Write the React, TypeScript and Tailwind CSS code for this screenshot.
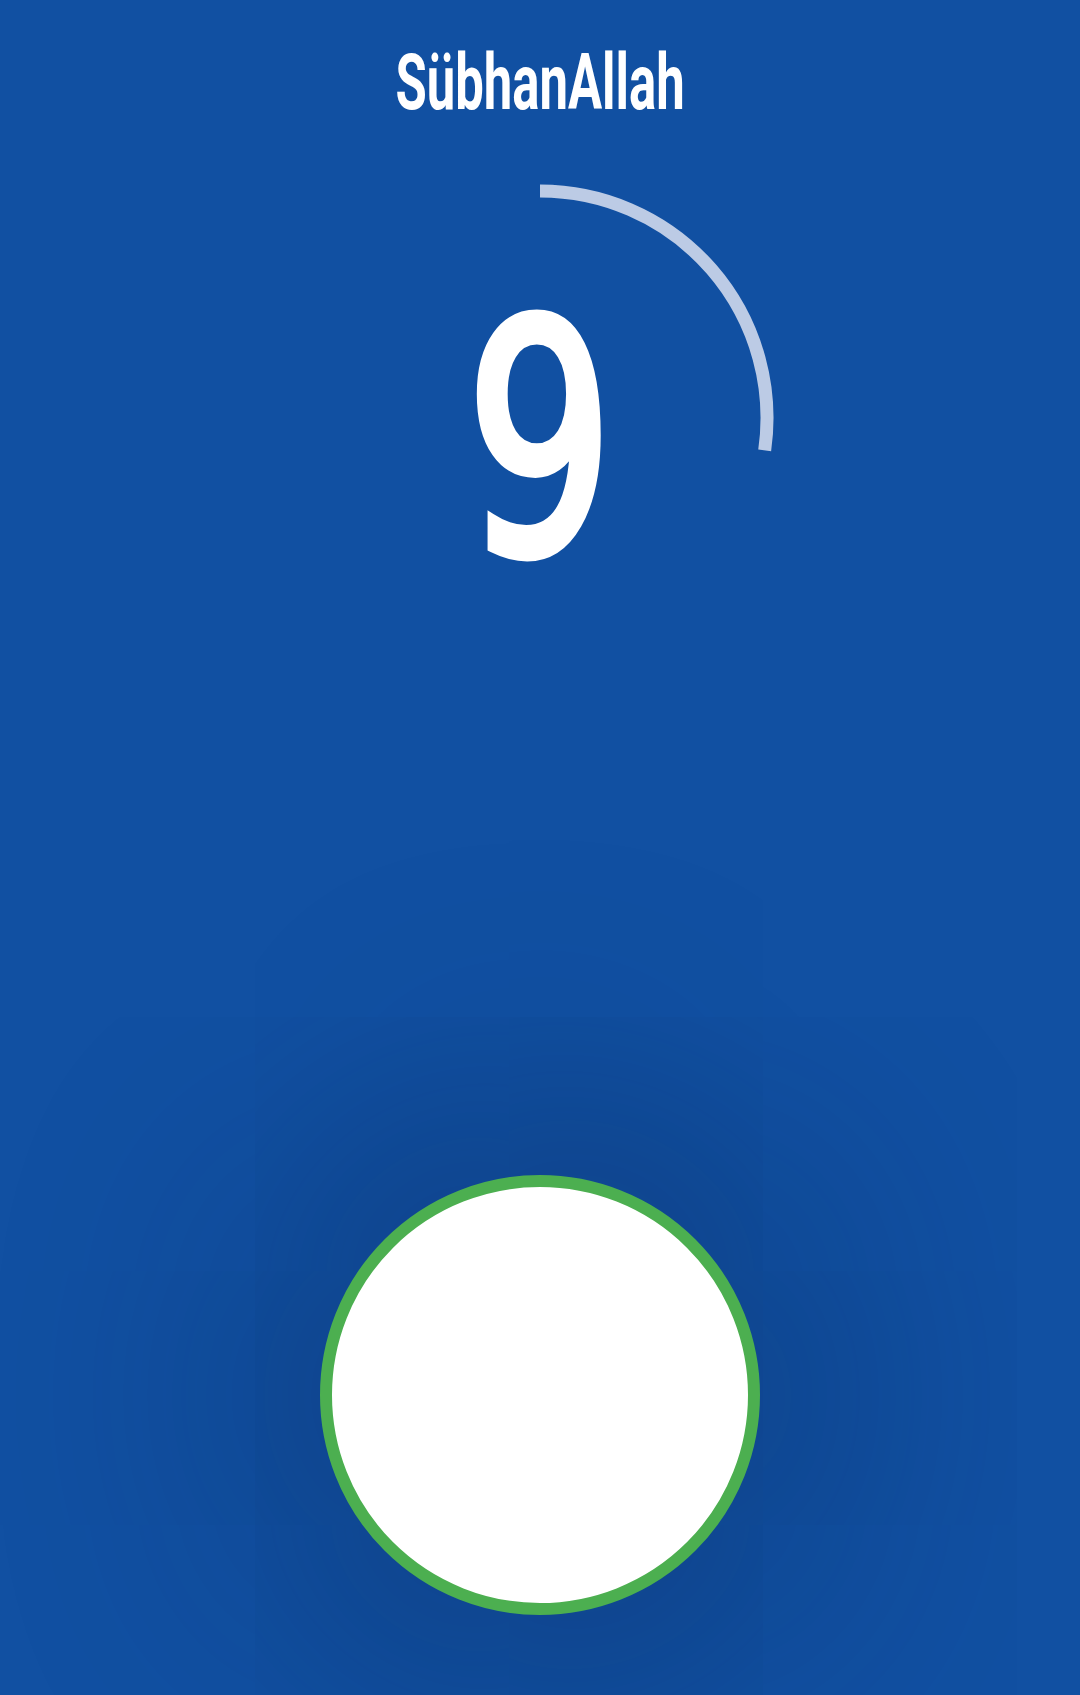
import React, { useState } from 'react';

const TARGET = 33;

export default function App() {
  const [count, setCount] = useState(9);

  // progress arc, clockwise from the top
  const angle = (Math.min(count, TARGET) / TARGET) * 2 * Math.PI;
  const r = 227;
  const ex = 240 + r * Math.sin(angle);
  const ey = 240 - r * Math.cos(angle);
  const large = angle > Math.PI ? 1 : 0;

  return (
    <div className="h-[1695px] w-full bg-[#1150a2] flex flex-col items-center overflow-hidden font-['Roboto',sans-serif]">
      <h1 className="mt-[45px] text-[77px] leading-none font-bold text-white scale-x-[0.66] whitespace-nowrap">
        SübhanAllah
      </h1>

      <div className="relative mt-[56px] w-[480px] h-[480px] flex justify-center">
        <svg className="absolute inset-0" width="480" height="480" viewBox="0 0 480 480">
          <path
            d={`M240 13 A${r} ${r} 0 ${large} 1 ${ex.toFixed(2)} ${ey.toFixed(2)}`}
            fill="none"
            stroke="#bccbe5"
            strokeWidth="13"
          />
        </svg>
        <span className="relative mt-[103px] text-[320px] leading-none font-normal text-white scale-x-[0.8] [-webkit-text-stroke:10px_white] font-['DejaVu_Sans_Condensed',sans-serif]">
          {count}
        </span>
      </div>

      <button
        onClick={() => setCount(c => c + 1)}
        className="mt-[517px] w-[440px] h-[440px] shrink-0 rounded-full bg-white border-[12px] border-[#4caf50] shadow-[0_0_260px_90px_rgba(6,30,70,0.28)]"
        aria-label="Say"
      />
    </div>
  );
}
